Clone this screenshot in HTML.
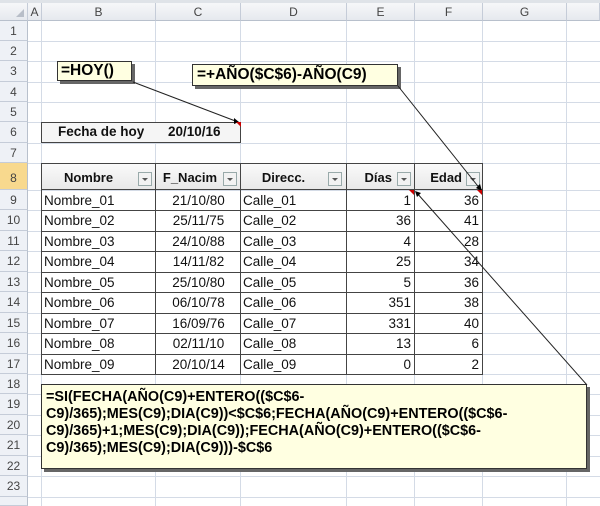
<!DOCTYPE html>
<html><head><meta charset="utf-8"><style>
*{margin:0;padding:0;box-sizing:border-box}
body{width:600px;height:506px;overflow:hidden;background:#fff;position:relative;font-family:"Liberation Sans",Arial,sans-serif}
.a{position:absolute}
.vl{position:absolute;width:1px;background:#d4dbe6;top:21px;height:485px}
.hl{position:absolute;height:1px;background:#d4dbe6;left:28px;width:572px}
.rh{position:absolute;left:0;width:28px;text-align:center;font-size:12px;color:#444;background:#eef1f6;border-bottom:1px solid #c5ccd8;border-right:1px solid #b8c0cc}
.ch{position:absolute;top:3px;height:18px;text-align:center;font-size:12px;color:#444;line-height:18px;background:linear-gradient(#f6f7f9,#e6e9ee);border-right:1px solid #c5ccd8;border-bottom:1px solid #b8c0cc}
.c{position:absolute;font-size:13.5px;color:#111;line-height:20px;white-space:nowrap;overflow:hidden}
.th{position:absolute;top:163px;height:27px;background:linear-gradient(#fafafa,#e8e8e8);font-weight:bold;font-size:13px;line-height:27px;color:#111}
.dd{position:absolute;top:8px;width:14px;height:14px;border:1px solid #9aa;background:#f2f2f2}
.dd:after{content:"";position:absolute;left:3px;top:5px;border-left:3px solid transparent;border-right:3px solid transparent;border-top:3px solid #555}
.note{position:absolute;background:#ffffe1;border:1px solid #333;box-shadow:3px 3px 0 #666;font-weight:bold;color:#000}
</style></head><body>
<div class="vl" style="left:41px"></div><div class="vl" style="left:155px"></div><div class="vl" style="left:240px"></div><div class="vl" style="left:346px"></div><div class="vl" style="left:414px"></div><div class="vl" style="left:482px"></div><div class="vl" style="left:566px"></div>
<div class="hl" style="top:41px"></div><div class="hl" style="top:61px"></div><div class="hl" style="top:82px"></div><div class="hl" style="top:102px"></div><div class="hl" style="top:122px"></div><div class="hl" style="top:143px"></div><div class="hl" style="top:163px"></div><div class="hl" style="top:190px"></div><div class="hl" style="top:210px"></div><div class="hl" style="top:231px"></div><div class="hl" style="top:251px"></div><div class="hl" style="top:272px"></div><div class="hl" style="top:292px"></div><div class="hl" style="top:313px"></div><div class="hl" style="top:333px"></div><div class="hl" style="top:354px"></div><div class="hl" style="top:374px"></div><div class="hl" style="top:394px"></div><div class="hl" style="top:415px"></div><div class="hl" style="top:435px"></div><div class="hl" style="top:456px"></div><div class="hl" style="top:476px"></div><div class="hl" style="top:497px"></div>
<div class="a" style="left:0;top:0;width:600px;height:3px;background:#dfe3e8"></div>
<div class="ch" style="left:0;width:28px"><span style="position:absolute;right:3px;bottom:3px;border-left:8px solid transparent;border-bottom:8px solid #b8bec8"></span></div>
<div class="ch" style="left:28px;width:14px">A</div>
<div class="ch" style="left:42px;width:114px">B</div>
<div class="ch" style="left:156px;width:85px">C</div>
<div class="ch" style="left:241px;width:106px">D</div>
<div class="ch" style="left:347px;width:68px">E</div>
<div class="ch" style="left:415px;width:68px">F</div>
<div class="ch" style="left:483px;width:84px">G</div>
<div class="ch" style="left:567px;width:33px"></div>
<div class="rh" style="top:21px;height:20px;line-height:20px">1</div>
<div class="rh" style="top:41px;height:20px;line-height:20px">2</div>
<div class="rh" style="top:61px;height:21px;line-height:21px">3</div>
<div class="rh" style="top:82px;height:20px;line-height:20px">4</div>
<div class="rh" style="top:102px;height:20px;line-height:20px">5</div>
<div class="rh" style="top:122px;height:21px;line-height:21px">6</div>
<div class="rh" style="top:143px;height:20px;line-height:20px">7</div>
<div class="rh" style="top:163px;height:27px;line-height:30px;background:#f8d98e">8</div>
<div class="rh" style="top:190px;height:20px;line-height:21px">9</div>
<div class="rh" style="top:210px;height:21px;line-height:21px">10</div>
<div class="rh" style="top:231px;height:20px;line-height:20px">11</div>
<div class="rh" style="top:251px;height:21px;line-height:21px">12</div>
<div class="rh" style="top:272px;height:20px;line-height:20px">13</div>
<div class="rh" style="top:292px;height:21px;line-height:21px">14</div>
<div class="rh" style="top:313px;height:20px;line-height:20px">15</div>
<div class="rh" style="top:333px;height:21px;line-height:21px">16</div>
<div class="rh" style="top:354px;height:20px;line-height:20px">17</div>
<div class="rh" style="top:374px;height:20px;line-height:20px">18</div>
<div class="rh" style="top:394px;height:21px;line-height:21px">19</div>
<div class="rh" style="top:415px;height:20px;line-height:20px">20</div>
<div class="rh" style="top:435px;height:21px;line-height:21px">21</div>
<div class="rh" style="top:456px;height:20px;line-height:20px">22</div>
<div class="rh" style="top:476px;height:21px;line-height:21px">23</div>
<div class="rh" style="top:497px;height:9px"></div>
<div class="a" style="left:41px;top:122px;width:200px;height:21px;border:1px solid #444;background:#f5f5f5"></div>
<div class="c" style="left:58px;top:122px;font-weight:bold">Fecha de hoy</div>
<div class="c" style="left:168px;top:122px;font-weight:bold">20/10/16</div>
<div class="th" style="left:41px;width:115px;border:1px solid #444;text-align:center;padding-right:20px">Nombre<span class="dd" style="right:3px"></span></div>
<div class="th" style="left:155px;width:86px;border:1px solid #444;text-align:center;padding-right:16px">F_Nacim<span class="dd" style="right:3px"></span></div>
<div class="th" style="left:240px;width:107px;border:1px solid #444;text-align:center;padding-right:20px">Direcc.<span class="dd" style="right:4px"></span></div>
<div class="th" style="left:346px;width:69px;border:1px solid #444;text-align:right;padding-right:22px">Días<span class="dd" style="right:3px"></span></div>
<div class="th" style="left:414px;width:69px;border:1px solid #444;text-align:right;padding-right:20px">Edad<span class="dd" style="right:2px"></span></div>
<div class="a" style="left:41px;top:189px;width:442px;height:186px;border:1px solid #444"></div>
<div class="a" style="left:155px;top:189px;width:1px;height:186px;background:#444"></div>
<div class="a" style="left:240px;top:189px;width:1px;height:186px;background:#444"></div>
<div class="a" style="left:346px;top:189px;width:1px;height:186px;background:#444"></div>
<div class="a" style="left:414px;top:189px;width:1px;height:186px;background:#444"></div>
<div class="a" style="left:41px;top:210px;width:442px;height:1px;background:#444"></div>
<div class="a" style="left:41px;top:231px;width:442px;height:1px;background:#444"></div>
<div class="a" style="left:41px;top:251px;width:442px;height:1px;background:#444"></div>
<div class="a" style="left:41px;top:272px;width:442px;height:1px;background:#444"></div>
<div class="a" style="left:41px;top:292px;width:442px;height:1px;background:#444"></div>
<div class="a" style="left:41px;top:313px;width:442px;height:1px;background:#444"></div>
<div class="a" style="left:41px;top:333px;width:442px;height:1px;background:#444"></div>
<div class="a" style="left:41px;top:354px;width:442px;height:1px;background:#444"></div>
<div class="c" style="left:44px;top:191px">Nombre_01</div><div class="c" style="left:156px;width:85px;text-align:center;top:191px">21/10/80</div><div class="c" style="left:243px;top:191px">Calle_01</div><div class="c" style="left:347px;width:64px;text-align:right;top:191px">1</div><div class="c" style="left:415px;width:64px;text-align:right;top:191px">36</div>
<div class="c" style="left:44px;top:211px">Nombre_02</div><div class="c" style="left:156px;width:85px;text-align:center;top:211px">25/11/75</div><div class="c" style="left:243px;top:211px">Calle_02</div><div class="c" style="left:347px;width:64px;text-align:right;top:211px">36</div><div class="c" style="left:415px;width:64px;text-align:right;top:211px">41</div>
<div class="c" style="left:44px;top:232px">Nombre_03</div><div class="c" style="left:156px;width:85px;text-align:center;top:232px">24/10/88</div><div class="c" style="left:243px;top:232px">Calle_03</div><div class="c" style="left:347px;width:64px;text-align:right;top:232px">4</div><div class="c" style="left:415px;width:64px;text-align:right;top:232px">28</div>
<div class="c" style="left:44px;top:252px">Nombre_04</div><div class="c" style="left:156px;width:85px;text-align:center;top:252px">14/11/82</div><div class="c" style="left:243px;top:252px">Calle_04</div><div class="c" style="left:347px;width:64px;text-align:right;top:252px">25</div><div class="c" style="left:415px;width:64px;text-align:right;top:252px">34</div>
<div class="c" style="left:44px;top:273px">Nombre_05</div><div class="c" style="left:156px;width:85px;text-align:center;top:273px">25/10/80</div><div class="c" style="left:243px;top:273px">Calle_05</div><div class="c" style="left:347px;width:64px;text-align:right;top:273px">5</div><div class="c" style="left:415px;width:64px;text-align:right;top:273px">36</div>
<div class="c" style="left:44px;top:293px">Nombre_06</div><div class="c" style="left:156px;width:85px;text-align:center;top:293px">06/10/78</div><div class="c" style="left:243px;top:293px">Calle_06</div><div class="c" style="left:347px;width:64px;text-align:right;top:293px">351</div><div class="c" style="left:415px;width:64px;text-align:right;top:293px">38</div>
<div class="c" style="left:44px;top:314px">Nombre_07</div><div class="c" style="left:156px;width:85px;text-align:center;top:314px">16/09/76</div><div class="c" style="left:243px;top:314px">Calle_07</div><div class="c" style="left:347px;width:64px;text-align:right;top:314px">331</div><div class="c" style="left:415px;width:64px;text-align:right;top:314px">40</div>
<div class="c" style="left:44px;top:334px">Nombre_08</div><div class="c" style="left:156px;width:85px;text-align:center;top:334px">02/11/10</div><div class="c" style="left:243px;top:334px">Calle_08</div><div class="c" style="left:347px;width:64px;text-align:right;top:334px">13</div><div class="c" style="left:415px;width:64px;text-align:right;top:334px">6</div>
<div class="c" style="left:44px;top:355px">Nombre_09</div><div class="c" style="left:156px;width:85px;text-align:center;top:355px">20/10/14</div><div class="c" style="left:243px;top:355px">Calle_09</div><div class="c" style="left:347px;width:64px;text-align:right;top:355px">0</div><div class="c" style="left:415px;width:64px;text-align:right;top:355px">2</div>
<div class="note" style="left:57px;top:61px;width:75px;height:20px;font-size:15.5px;line-height:18px;padding-left:3px">=HOY()</div>
<div class="note" style="left:192px;top:64px;width:206px;height:22px;font-size:15.5px;line-height:20px;padding-left:4px">=+AÑO($C$6)-AÑO(C9)</div>
<div class="note" style="left:41px;top:384px;width:546px;height:85px;font-size:14.4px;line-height:17px;padding:4px 0 0 4px;white-space:nowrap">=SI(FECHA(AÑO(C9)+ENTERO(($C$6-<br>C9)/365);MES(C9);DIA(C9))&lt;$C$6;FECHA(AÑO(C9)+ENTERO(($C$6-<br>C9)/365)+1;MES(C9);DIA(C9));FECHA(AÑO(C9)+ENTERO(($C$6-<br>C9)/365);MES(C9);DIA(C9)))-$C$6</div>
<svg class="a" style="left:0;top:0" width="600" height="506">
<line x1="133" y1="82" x2="238" y2="122" stroke="#222" stroke-width="1"/>
<line x1="398" y1="86" x2="481" y2="190" stroke="#222" stroke-width="1"/>
<line x1="587" y1="385" x2="416" y2="192" stroke="#222" stroke-width="1"/>
<polygon points="239,122 234,118 234,124" fill="#000"/>
<polygon points="482,191 476,188 480,184" fill="#000"/>
<polygon points="415,191 421,193 417,197" fill="#000"/>
<polygon points="241,122 236,122 241,127" fill="#c00"/>
<polygon points="414,190 409,190 414,195" fill="#c00"/>
<polygon points="482,190 477,190 482,195" fill="#c00"/>
</svg>
</body></html>
